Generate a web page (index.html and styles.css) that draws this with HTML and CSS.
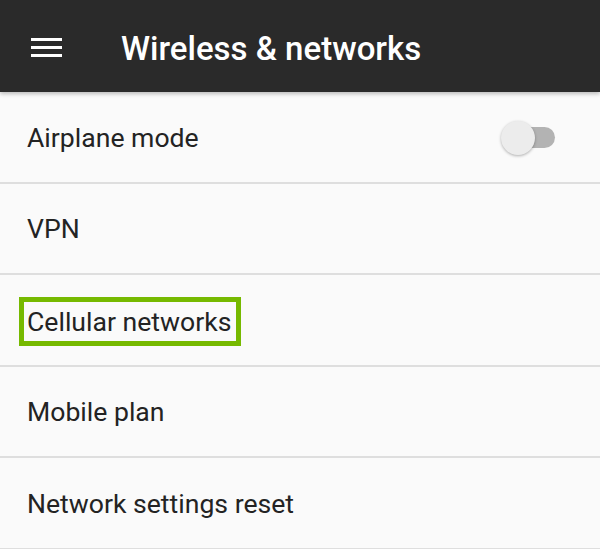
FILE: index.html
```html
<!DOCTYPE html>
<html>
<head>
<meta charset="utf-8">
<link rel="stylesheet" href="styles.css">
</head>
<body>
<div class="app">
  <header class="toolbar">
    <div class="menu"><span></span><span></span><span></span></div>
    <h1 class="title">Wireless &amp; networks</h1>
  </header>
  <ul class="list">
    <li class="row"><span class="label">Airplane mode</span><span class="switch"><span class="track"></span><span class="thumb"></span></span></li>
    <li class="row"><span class="label">VPN</span></li>
    <li class="row"><span class="label highlight">Cellular networks</span></li>
    <li class="row"><span class="label">Mobile plan</span></li>
    <li class="row"><span class="label">Network settings reset</span></li>
  </ul>
</div>
</body>
</html>
```
FILE: styles.css
```css
* { box-sizing: border-box; }
html, body { margin: 0; padding: 0; }
body {
  width: 600px;
  height: 549px;
  overflow: hidden;
  background: #fafafa;
  font-family: Roboto, "Liberation Sans", sans-serif;
}
.app { position: relative; }
.toolbar {
  height: 92px;
  background: #2a2a2a;
  display: flex;
  align-items: center;
  padding-left: 31px;
  box-shadow: 0 2px 4px rgba(0,0,0,0.25);
  position: relative;
  z-index: 1;
}
.menu {
  width: 31px;
  display: flex;
  flex-direction: column;
  gap: 5px;
  margin-top: 2px;
}
.menu span {
  display: block;
  height: 3px;
  background: #ffffff;
}
.title {
  margin: 4px 0 0 59px;
  color: #ffffff;
  font-size: 33px;
  font-weight: 500;
  letter-spacing: 0;
}
.list {
  list-style: none;
  margin: 0;
  padding: 0;
}
.row {
  height: 91.5px;
  display: flex;
  align-items: center;
  justify-content: space-between;
  padding-left: 27px;
  padding-right: 45px;
  border-bottom: 2px solid #dedede;
  color: #232323;
  font-size: 26.6px;
}
.label { line-height: 1; margin-top: 3px; }
.highlight {
  display: inline-block;
  margin-left: -8px;
  margin-top: 3px;
  border: 5px solid #76b900;
  padding: 7px 5px 5px 3px;
}
.switch {
  position: relative;
  width: 54px;
  height: 34px;
  margin-top: 3px;
}
.track {
  position: absolute;
  left: 10px;
  top: 6px;
  width: 44px;
  height: 21px;
  border-radius: 11px;
  background: #b3b3b3;
}
.thumb {
  position: absolute;
  left: 0;
  top: 0;
  width: 34px;
  height: 34px;
  border-radius: 50%;
  background: #ececec;
  box-shadow: 0 1px 3px rgba(0,0,0,0.3);
}
```
